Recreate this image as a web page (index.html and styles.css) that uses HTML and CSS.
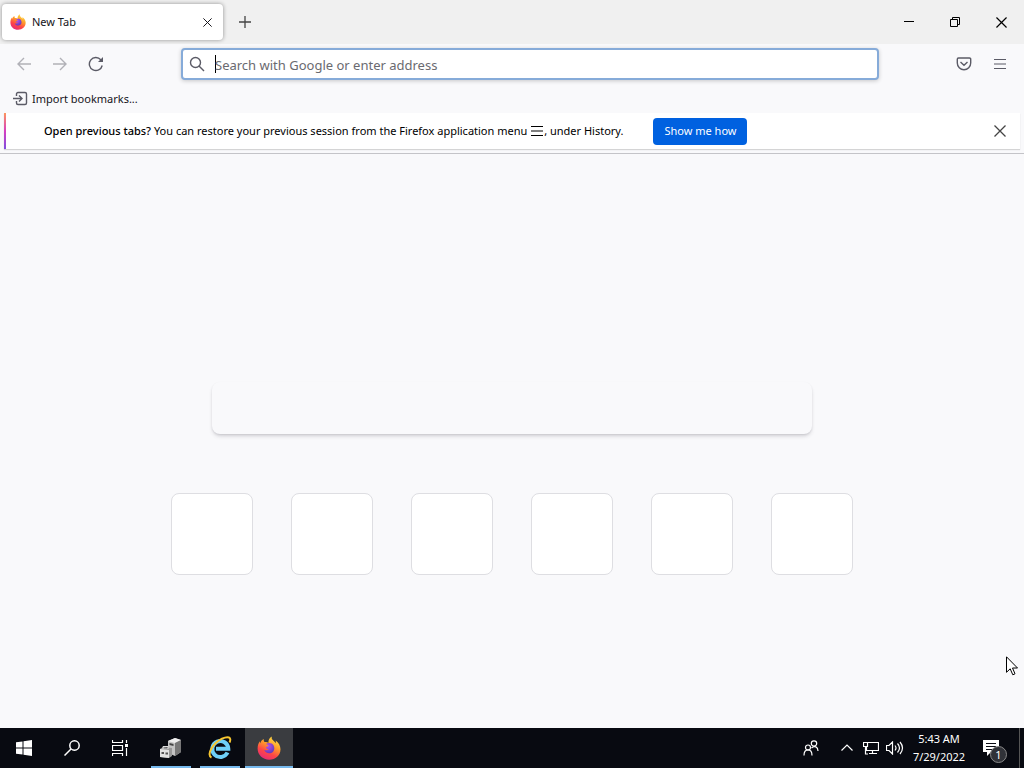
FILE: index.html
```
<!DOCTYPE html>
<html lang="en">
<head>
    <title>New Tab</title>
    <meta charset="UTF-8">
    <meta name="viewport" content="width=device-width">
    <link rel="stylesheet" href="styles.css">
</head>
<body>

<!-- shared shapes -->
<svg class="defs" aria-hidden="true">
    <defs>
        <linearGradient id="flame" x1="0.8" y1="0" x2="0.3" y2="1">
            <stop offset="0" stop-color="#ffe847"/>
            <stop offset="0.4" stop-color="#ff9a2b"/>
            <stop offset="0.7" stop-color="#ff4646"/>
            <stop offset="1" stop-color="#e62a78"/>
        </linearGradient>
        <radialGradient id="globe" cx="0.4" cy="0.3" r="0.8">
            <stop offset="0" stop-color="#b650e8"/>
            <stop offset="1" stop-color="#5a38b8"/>
        </radialGradient>
        <symbol id="firefox" viewBox="0 0 24 24">
            <path fill="url(#flame)" d="M15 0.5c-1 2 .2 3 1.500 4.200c1 .9 1.700 1.500 2.300 2.600c.2-1 .1-1.900-.2-2.800c3 2 4.900 5.300 4.900 8.700c0 6-5 10.500-11.300 10.500c-6.500 0-11.600-4.800-11.600-11.100c0-3.300 1-5.700 2.200-7.400c0 .8.1 1.400.4 2c.8-2 2-3.500 3.500-4.200c-.2 1.100.1 2.100.7 3c2.200-.1 3.300.4 4 .9c-.3-2.600 1.200-5.400 3.600-6.400z"/>
            <path fill="url(#globe)" d="M9 8c2-1.500 6-1.500 7.500 1.200c1.600 3 .8 6.500-2.300 7.700c-3 1.100-6.200-.3-7-3.200c1.500 1 3.500.8 4.800-.5c-1.500 0-3-.6-3-1.800c0-.7 2.300-1 2.500-2z"/>
        </symbol>
        <symbol id="cross" viewBox="0 0 12 12">
            <path d="M.5.5l11 11M11.500.5l-11 11" fill="none" stroke="currentColor" stroke-width="1.300"/>
        </symbol>
        <symbol id="menu" viewBox="0 0 12 12">
            <path d="M0 1.500h12M0 6h12M0 10.500h12" fill="none" stroke="currentColor" stroke-width="1.200"/>
        </symbol>
    </defs>
</svg>

<header class="titlebar">
    <div class="tab">
        <svg class="tab-icon"><use href="#firefox"/></svg>
        <span class="tab-label">New Tab</span>
        <button class="tab-close" aria-label="Close tab"><svg width="9" height="9"><use href="#cross"/></svg></button>
    </div>
    <button class="new-tab" aria-label="Open a new tab">
        <svg width="12" height="12" viewBox="0 0 12 12"><path d="M6 0v12M0 6h12" fill="none" stroke="#444" stroke-width="1.300"/></svg>
    </button>
    <div class="window-buttons">
        <button aria-label="Minimize"><svg width="10" height="10"><path d="M0 4.500h10" stroke="#000"/></svg></button>
        <button aria-label="Restore"><svg width="10" height="10" fill="none" stroke="#000"><path d="M.5 2.500h7v7h-7zM2.500 2.500v-2h7v7h-2"/></svg></button>
        <button aria-label="Close"><svg width="11" height="11"><use href="#cross"/></svg></button>
    </div>
</header>

<nav class="toolbar">
    <div class="nav-buttons">
        <button class="dim" aria-label="Back"><svg width="14" height="14"><path d="M14 7H1M7 1L1 7l6 6"/></svg></button>
        <button class="dim" aria-label="Forward"><svg width="14" height="14"><path d="M0 7h13M7 1l6 6l-6 6"/></svg></button>
        <button aria-label="Reload"><svg width="16" height="16"><path d="M14.200 9.500A6.500 6.500 0 1 1 12.800 3.800L14 5"/><path d="M15 1v5h-5z" fill="#5b5b66" stroke="none"/></svg></button>
    </div>
    <div class="urlbar">
        <svg width="16" height="16"><circle cx="6.500" cy="6.500" r="5"/><path d="M10 10l5 5"/></svg>
        <span class="caret"></span>
        <input type="text" aria-label="Search or enter address" placeholder="Search with Google or enter address">
    </div>
    <div class="nav-buttons right">
        <button aria-label="Save to Pocket"><svg width="16" height="16"><path d="M2.500 2h11a1.200 1.200 0 0 1 1.200 1.200V7a6.700 6.700 0 0 1-13.400 0V3.200A1.200 1.200 0 0 1 2.500 2zM4.500 6L8 9.200L11.500 6"/></svg></button>
        <button aria-label="Open application menu"><svg width="12" height="12"><use href="#menu"/></svg></button>
    </div>
</nav>

<div class="bookmarks">
    <button class="import">
        <svg width="16" height="16"><path d="M4.500 5V3a1.500 1.500 0 0 1 1.500-1.500h7A1.500 1.500 0 0 1 14.500 3v9a1.500 1.500 0 0 1-1.500 1.500H6A1.500 1.500 0 0 1 4.500 12v-2M1 7.500h9M7 4.500l3 3l-3 3"/></svg>
        Import bookmarks...
    </button>
</div>

<div class="notification">
    <p><strong>Open previous tabs?</strong> You can restore your previous session from the Firefox application menu <svg class="inline-menu" width="12" height="12"><use href="#menu"/></svg>, under History.</p>
    <button class="primary">Show me how</button>
    <button class="dismiss" aria-label="Close notification"><svg width="12" height="12"><use href="#cross"/></svg></button>
</div>

<main class="newtab">
    <div class="search-box"></div>
    <div class="top-sites">
        <div class="tile"></div>
        <div class="tile"></div>
        <div class="tile"></div>
        <div class="tile"></div>
        <div class="tile"></div>
        <div class="tile"></div>
    </div>
</main>

<footer class="taskbar">
    <button aria-label="Start"><svg width="16" height="16" fill="#fff"><path d="M0 2.300L6.500 1.400V7.500H0zM7.500 1.200L16 0v7.500H7.500zM0 8.500h6.500v6.100L0 13.700zM7.500 8.500H16V16l-8.500-1.200z"/></svg></button>
    <button aria-label="Search"><svg width="16" height="16" fill="none" stroke="#fff" stroke-width="1.500"><circle cx="10.500" cy="5.500" r="4.700"/><path d="M7 9L.5 15.500"/></svg></button>
    <button aria-label="Task View"><svg width="16" height="16" fill="none" stroke="#fff" stroke-width="1.200"><path d="M.5 0v2.500h10V0M.5 5.500h10v5H.5zM.5 16v-2.500h10V16M14.500 0v3M14.500 8v8"/><path d="M13 4h3v3h-3z" fill="#fff" stroke="none"/></svg></button>
    <div class="apps">
        <button class="running" aria-label="Server Manager">
            <svg width="22" height="22">
                <path d="M8 4l7-3l6 2v12l-6 4l-7-3z" fill="#c4c4c4"/>
                <path d="M8 4l7-3l6 2l-6 3z" fill="#eee"/>
                <path d="M15 6l6-3v12l-6 4z" fill="#777"/>
                <path d="M9.500 6l4 1v2l-4-1z" fill="#444"/>
                <path d="M0 12l3-2l9 1v8l-3 2l-9-1z" fill="#999"/>
                <path d="M0 12l9 1v8l-9-1z" fill="#e2e2e2"/>
                <path d="M1.500 15h2.500v2H1.500zM5.500 15.500H8v2H5.500z" fill="#555"/>
                <path d="M3 12v-2.500h5V12" fill="none" stroke="#ddd"/>
            </svg>
        </button>
        <button class="running" aria-label="Internet Explorer">
            <svg width="24" height="24" fill="none">
                <path d="M19.500 16.500A8 8 0 1 1 20.300 12.700H8" stroke="#6fd0f7" stroke-width="4"/>
                <path d="M3.500 21.500C-2 19 5 7 14 2.700C20 0 24 1 21.500 6.500" stroke="#f7c62f" stroke-width="2"/>
            </svg>
        </button>
        <button class="running active" aria-label="Firefox"><svg width="24" height="24"><use href="#firefox"/></svg></button>
    </div>
    <div class="tray">
        <button class="people" aria-label="People"><svg width="16" height="16"><circle cx="5" cy="7.500" r="2.500"/><path d="M1 15.500c0-7.500 8-7.500 8 0"/><circle cx="11" cy="3.500" r="2.700"/><path d="M8.500 8c3-3 6.500-1 6.500 3"/></svg></button>
        <button aria-label="Show hidden icons"><svg width="12" height="8"><path d="M.5 6.500L6 1l5.500 5.500"/></svg></button>
        <button aria-label="Network"><svg width="16" height="14"><path d="M5 1.500h10.500v8H3.500V6M6 12.500h8M9.500 10v3M.5 1.500h4v4h-4zM2.500 6v7H5"/></svg></button>
        <button aria-label="Volume"><svg width="18" height="14"><path d="M.5 4.500H3L6.500 1v12L3 9.500H.5zM9 4.500q2 2.500 0 5M11.500 2.500q4 4.500 0 9M14 1q5 6 0 12"/></svg></button>
        <button class="clock"><time>5:43 AM</time><time>7/29/2022</time></button>
        <button class="action-center" aria-label="Notifications">
            <svg width="18" height="18"><path d="M1 1h16v12H9l-4 4v-4H1z" fill="#fff" stroke="none"/><path d="M4 4.500h10M4 7.500h10M4 10.500h7" stroke="#0a0c14"/></svg>
            <span class="badge">1</span>
        </button>
    </div>
</footer>

<svg class="pointer" width="12" height="20" aria-hidden="true"><path d="M.5.8v15.500l3.700-3.500l2.600 6l2.200-1l-2.500-5.800h5z" fill="#fff" stroke="#000"/></svg>

</body>
</html>
```
FILE: styles.css
```
html {
    box-sizing: border-box;
    height: 100%;
}
*, *:before, *:after {
    box-sizing: inherit;
}

body {
    margin: 0;
    min-height: 100%;
    display: flex;
    flex-direction: column;
    background-color: #f9f9fb;
    color: #15141a;
    font-family: "Noto Sans", "Open Sans", sans-serif;
    font-size: 11px;
    line-height: 16px;
    overflow: hidden;
}

button {
    display: flex;
    align-items: center;
    justify-content: center;
    padding: 0;
    border: 0;
    background: none;
    color: inherit;
    font: inherit;
}

svg {
    flex: none;
}

.defs {
    position: absolute;
    width: 0;
    height: 0;
}

/* tab strip */
.titlebar {
    display: flex;
    align-items: center;
    height: 44px;
    padding-left: 2px;
    background-color: #f0f0f0;
}

.tab {
    display: flex;
    align-items: center;
    width: 221px;
    height: 36px;
    padding: 0 8px;
    border-radius: 4px;
    background-color: #fff;
    box-shadow: 0 0 4px rgba(0, 0, 0, 0.4);
}

.tab-icon {
    width: 16px;
    height: 16px;
    margin-right: 6px;
}

.tab-label {
    flex: 1;
}

.tab-close {
    width: 16px;
    height: 24px;
}

.new-tab {
    width: 43px;
    height: 36px;
}

.window-buttons {
    display: flex;
    margin-left: auto;
}

.window-buttons button {
    width: 46px;
    height: 44px;
    color: #000;
}

/* navigation */
.toolbar {
    display: flex;
    align-items: center;
    height: 40px;
    padding: 0 6px;
}

.nav-buttons {
    display: flex;
    width: 175px;
}

.nav-buttons.right {
    width: 139px;
    justify-content: flex-end;
}

.nav-buttons button {
    width: 36px;
    height: 32px;
    color: #5b5b66;
}

.nav-buttons svg,
.urlbar svg,
.import svg {
    fill: none;
    stroke: #5b5b66;
    stroke-width: 1.4;
}

.nav-buttons .dim {
    opacity: 0.45;
}

.urlbar {
    flex: 1;
    display: flex;
    align-items: center;
    height: 32px;
    padding-left: 6px;
    border: 2px solid #86abd9;
    border-radius: 4px;
    background-color: #fff;
    box-shadow: 0 1px 4px rgba(0, 0, 0, 0.2);
}

.caret {
    width: 1px;
    height: 18px;
    margin: 0 -1px 0 10px;
    background-color: #000;
}

.urlbar input {
    flex: 1;
    min-width: 0;
    padding: 2px 0 0;
    border: 0;
    outline: none;
    background: none;
    font-family: "Noto Sans", "Open Sans", sans-serif;
    font-size: 13px;
}

.urlbar input::placeholder {
    color: #6a6a70;
}

.bookmarks {
    display: flex;
    align-items: center;
    height: 29px;
    padding: 0 12px;
}

.import svg {
    margin-right: 4px;
}

/* restore session message */
.notification {
    display: flex;
    align-items: center;
    height: 36px;
    margin: 0 4px 4px;
    padding-right: 4px;
    background-color: #fff;
    border-left: 2px solid;
    border-image: linear-gradient(#ff9a56, #d63fc0, #7a4fe0) 1;
    box-shadow: 0 1px 1px rgba(0, 0, 0, 0.15);
    color: #000;
}

.notification p {
    margin: 0 30px 0 38px;
}

.notification strong {
    font-weight: 500;
}

.inline-menu {
    margin: 0 1px;
    vertical-align: -2px;
}

.primary {
    height: 27px;
    padding: 0 11px;
    border-radius: 4px;
    background-color: #0061e0;
    color: #fff;
}

.dismiss {
    width: 32px;
    height: 32px;
    margin-left: auto;
    color: #444;
}

/* page */
.newtab {
    flex: 1;
    display: flex;
    flex-direction: column;
    align-items: center;
    padding: 228px 20px 0;
    border-top: 1px solid #c4c4c8;
}

.search-box {
    width: 100%;
    max-width: 600px;
    height: 52px;
    border-radius: 8px;
    background-color: #f9f9fb;
    box-shadow: 0 3px 4px -1px rgba(58, 57, 68, 0.2), 0 1px 2px rgba(58, 57, 68, 0.1);
}

.top-sites {
    display: flex;
    gap: 38px;
    margin-top: 59px;
}

.tile {
    width: 82px;
    height: 82px;
    border: 1px solid #dedee2;
    border-radius: 8px;
    background-color: #fff;
}

/* taskbar */
.taskbar {
    display: flex;
    height: 40px;
    background-color: #080a11;
    color: #fff;
}

.taskbar button {
    width: 48px;
    height: 40px;
}

.apps {
    display: flex;
    gap: 1px;
    margin-left: 3px;
}

.running {
    background: linear-gradient(#76b9ed, #76b9ed) bottom / 40px 2px no-repeat;
}

.running.active {
    background-color: #3a3c40;
    background-size: 100% 2px;
}

.tray {
    display: flex;
    margin-left: auto;
    padding-right: 4px;
    background: linear-gradient(#555, #555) right 4px top / 1px 100% no-repeat;
}

.tray svg {
    fill: none;
    stroke: #fff;
    stroke-width: 1.2;
}

.taskbar .tray button {
    width: 24px;
}

.taskbar .tray .people {
    margin-right: 12px;
}

.taskbar .tray .clock {
    width: 64px;
    flex-direction: column;
    font-size: 11px;
    line-height: 18px;
}

.taskbar .tray .action-center {
    position: relative;
    width: 49px;
    padding-right: 10px;
}

.badge {
    position: absolute;
    left: 19px;
    top: 18px;
    width: 17px;
    height: 17px;
    border: 1px solid #888;
    border-radius: 50%;
    background-color: #303238;
    font-size: 11px;
    line-height: 15px;
}

.pointer {
    position: absolute;
    left: 1006px;
    top: 656px;
}
```
